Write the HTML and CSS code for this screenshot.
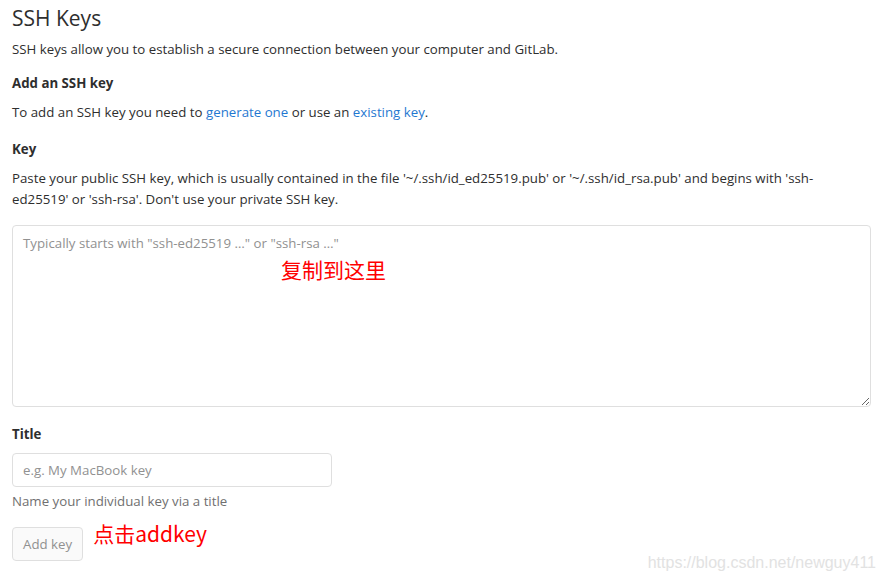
FILE: index.html
```html
<!DOCTYPE html>
<html lang="en">
<head>
    <meta charset="UTF-8">
    <meta name="viewport" content="width=device-width, initial-scale=1.0">
    <title>SSH Keys</title>
    <link rel="stylesheet" href="styles.css">
</head>
<body>
    <div class="page">
        <h1>SSH Keys</h1>
        <p class="lead">SSH keys allow you to establish a secure connection between your computer and GitLab.</p>

        <h4>Add an SSH key</h4>
        <p>To add an SSH key you need to <a href="#">generate one</a> or use an <a href="#">existing key</a>.</p>

        <div class="form-group">
            <label for="key">Key</label>
            <p class="hint">Paste your public SSH key, which is usually contained in the file '~/.ssh/id_ed25519.pub' or '~/.ssh/id_rsa.pub' and begins with 'ssh-ed25519' or 'ssh-rsa'. Don't use your private SSH key.</p>
            <div class="key-wrap">
                <textarea id="key" class="form-control" placeholder="Typically starts with &quot;ssh-ed25519 …&quot; or &quot;ssh-rsa …&quot;"></textarea>
                <span class="note note-key">复制到这里</span>
            </div>
        </div>

        <div class="form-group title-group">
            <label for="title">Title</label>
            <input id="title" class="form-control title-input" type="text" placeholder="e.g. My MacBook key">
            <p class="help">Name your individual key via a title</p>
        </div>

        <div class="actions">
            <button class="btn" disabled>Add key</button>
            <span class="note">点击addkey</span>
        </div>
    </div>
    <div class="watermark">https://blog.csdn.net/newguy411</div>
</body>
</html>
```

FILE: styles.css
```css
body {
    margin: 0;
    font-family: "Open Sans", "Noto Sans", sans-serif;
    font-size: 13.27px;
    color: #2e2e2e;
    background-color: white;
}
.page {
    padding: 4px 13px 0 12px;
}
h1 {
    font-size: 21px;
    font-weight: 400;
    margin: 0 0 7px;
    line-height: 28px;
}
p {
    margin: 0 0 12px;
    line-height: 21px;
}
.lead {
    margin-bottom: 13px;
}
h4 {
    font-size: 13.27px;
    font-weight: 700;
    margin: 0 0 8px;
    line-height: 21px;
}
a {
    color: #1f78d1;
    text-decoration: none;
}
label {
    display: block;
    font-weight: 700;
    line-height: 21px;
    margin: 16px 0 8px;
}
.title-group label {
    margin-top: 17px;
}
.hint {
    margin-bottom: 15px;
    padding-right: 12px;
}
.form-control {
    display: block;
    box-sizing: border-box;
    font-family: inherit;
    font-size: 13.27px;
    color: #2e2e2e;
    border: 1px solid #dfdfdf;
    border-radius: 4px;
    background: white;
}
.form-control::placeholder {
    color: #919191;
}
.key-wrap {
    position: relative;
}
textarea.form-control {
    width: 100%;
    height: 182px;
    padding: 7px 10px;
    line-height: 21px;
    resize: vertical;
}
.note {
    color: #f00;
    font-family: "Noto Sans CJK SC", sans-serif;
    font-size: 21px;
    line-height: 28px;
}
.note-key {
    position: absolute;
    left: 269px;
    top: 30px;
}
.title-input {
    width: 320px;
    height: 34px;
    padding: 6px 10px;
}
.help {
    color: #707070;
    margin: 4px 0 15px;
}
.actions {
    display: flex;
    align-items: center;
    gap: 10px;
}
.btn {
    font-family: inherit;
    font-size: 13.27px;
    color: #919191;
    background: #fafafa;
    border: 1px solid #dfdfdf;
    border-radius: 4px;
    height: 34px;
    padding: 6px 10px;
}
.actions .note {
    margin-top: -22px;
}
.watermark {
    position: absolute;
    right: 8px;
    top: 554px;
    font-family: "Liberation Sans", sans-serif;
    font-size: 16px;
    color: #e2e2e2;
}
```
